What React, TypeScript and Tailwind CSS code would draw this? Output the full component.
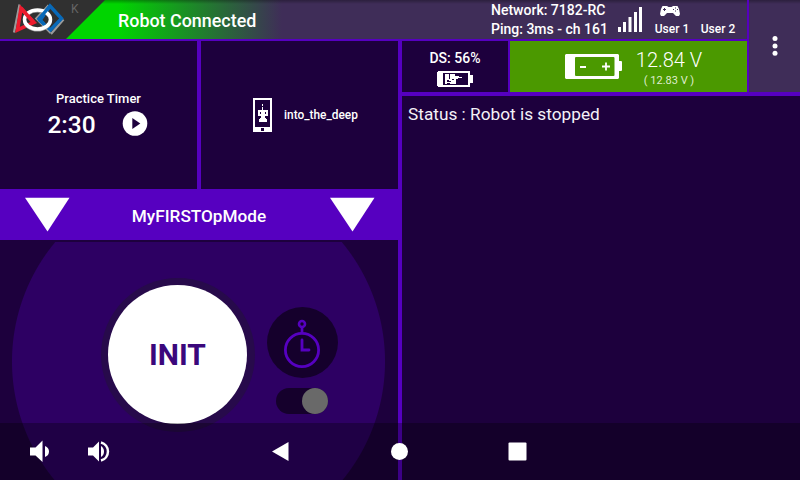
import React from "react";

function FirstLogo() {
  return (
    <svg className="ml-[12px] mt-[3px] h-[32px] w-[53px] shrink-0" viewBox="12 3 53 32" fill="none">
      <path d="M19.500 4.500L14 32.500M51 34L63.500 19.500" stroke="#9a9a9a" strokeWidth="2.200" />
      <path d="M48.500 5L36 18.500L50.500 33" stroke="#999" strokeWidth="1.800" />
      <path d="M21 8.500L17.500 30L34 22.500Z" stroke="#ed1c2e" strokeWidth="3.600" />
      <path d="M50 6L61.500 18.500L50.500 30L40 20.500Z" stroke="#0869b8" strokeWidth="3.400" />
      <ellipse cx="37.500" cy="20.500" rx="13" ry="9.500" stroke="#999" strokeWidth="3" />
      <ellipse cx="37.500" cy="19.500" rx="13" ry="9.500" stroke="#fff" strokeWidth="3.500" />
      <path d="M21 8L33.500 22.500" stroke="#ed1c2e" strokeWidth="3.600" />
      <path d="M44 24L39 19L50 6" stroke="#0869b8" strokeWidth="3.400" />
    </svg>
  );
}

function Header() {
  return (
    <header className="flex h-[39px] bg-[linear-gradient(180deg,#0000004d_0px,#00000000_4px),linear-gradient(90deg,#00d500_0px,#00d500_118px,#3f2d58_282px)]">
      <div className="flex h-full w-[106px] shrink-0 bg-[#303030] [clip-path:polygon(0_0,105px_0,66px_100%,0_100%)]">
        <FirstLogo />
        <span className="ml-[6px] mt-[1px] text-[12px] leading-[16px] text-[#656565]">K</span>
      </div>
      <div className="ml-[12px] mt-[1px] w-[373px] text-[17.900px] font-medium leading-[39px]">Robot Connected</div>
      <div className="w-[127px] text-[14px] font-medium leading-[19px] whitespace-nowrap">
        <div className="mt-[1px]">Network: 7182-RC</div>
        <div>Ping: 3ms - ch 161</div>
      </div>
      <svg className="mt-[6px] h-[27px] w-[25px]" viewBox="618 6 25 27" fill="#fff">
        <path d="M618 27h3v5h-3zM623 22h3v10h-3zM628.500 17h3v15h-3zM634 12h3v20h-3zM639 7h3v25h-3z" />
      </svg>
      <div className="ml-[9px] w-[40px] text-center text-[12px] font-medium leading-[14px]">
        <svg className="ml-[7px] mt-[5px] h-[12px] w-[22px]" viewBox="659 5 22 12">
          <path d="M662.500 6h4.500l1.500 1h3l1.500-1h4.500l1.500 3 1 5-1 2h-3l-3-3h-6l-3 3h-3l-1-2 1-5z" fill="#fff" />
          <path d="M664.500 8v3M663 9.500h3M673 9.500h1M675 8h1M675 11h1M677 9.500h1" stroke="#3f2d58" strokeWidth="1" />
        </svg>
        <div className="mt-[5px] whitespace-nowrap">User 1</div>
      </div>
      <div className="ml-[5px] mt-[22px] w-[42px] text-center text-[12px] font-medium leading-[14px] whitespace-nowrap">User 2</div>
    </header>
  );
}

function LeftPane() {
  return (
    <section className="flex w-[398px] shrink-0 flex-col">
      <div className="flex h-[148px] gap-[4px]">
        <div className="flex w-[197px] flex-col items-center bg-[#1d003d] pt-[50px]">
          <div className="text-[13px] font-medium leading-[16px]">Practice Timer</div>
          <div className="mt-[2px] flex items-start gap-[26px] pr-[2px]">
            <span className="text-[24.500px] font-medium leading-[32px]">2:30</span>
            <svg className="mt-[2px] h-[26px] w-[26px]" viewBox="0 0 26 26">
              <circle cx="13" cy="12.500" r="12.300" fill="#fff" />
              <path d="M10.300 7v11l8-5.500z" fill="#1d003d" />
            </svg>
          </div>
        </div>
        <div className="flex w-[197px] items-start bg-[#1d003d]">
          <svg className="ml-[52px] mt-[57px] h-[34px] w-[19px]" viewBox="0 0 19 34" shapeRendering="crispEdges">
            <path d="M0 0h19v34H0z" fill="#fff" />
            <path d="M2 2h15v27H2zM8 30h3v3H8z" fill="#1d003d" />
            <path d="M9 6h1v2H9zM9 9h1v3h5v6h-3v2h1v1h1v3H6v-3h1v-1h1v-2H5v-6h4z" fill="#fff" />
            <path d="M7 14h1v2H7zM12 14h1v2h-1z" fill="#1d003d" />
          </svg>
          <span className="ml-[12px] mt-[66px] text-[11.900px] font-medium leading-[16px]">into_the_deep</span>
        </div>
      </div>
      <div className="flex h-[51px] items-start bg-[#5600c0]">
        <svg className="ml-[25px] mt-[8px] h-[35px] w-[45px]" viewBox="0 0 45 35"><path d="M0 .8h44.500L22.500 34.500z" fill="#fff" /></svg>
        <div className="mt-[14px] w-[260px] text-center text-[17.200px] font-medium leading-[26px]"><span className="relative left-[-1px]">MyFIRSTOpMode</span></div>
        <svg className="mt-[8px] h-[35px] w-[45px]" viewBox="0 0 45 35"><path d="M0 .8h44.500L22.500 34.500z" fill="#fff" /></svg>
      </div>
      <div className="h-[240px] bg-[#1d003d] pt-[2px]">
        <div className="flex h-[238px] items-start bg-[radial-gradient(circle_at_198.500px_119.500px,#2d0063_186px,transparent_187px)]">
          <button className="ml-[101px] mt-[36px] flex h-[154px] w-[154px] items-center justify-center rounded-full bg-[#270a4b]">
            <span className="mr-px mb-px flex h-[139px] w-[139px] items-center justify-center rounded-full bg-white text-[30px] font-bold text-[#3b087c]">INIT</span>
          </button>
          <div className="ml-[12px] mt-[65px] flex w-[71px] flex-col">
            <svg className="h-[71px] w-[71px]" viewBox="267 307 71 71" fill="none" stroke="#5600c0">
              <circle cx="302.500" cy="342.500" r="35.500" fill="#15002c" stroke="none" />
              <circle cx="302" cy="350" r="16.600" strokeWidth="2.800" />
              <circle cx="302" cy="324" r="3" strokeWidth="2.600" />
              <path d="M302 328v6" strokeWidth="2.700" />
              <path d="M302 340v10h7" strokeWidth="2.800" strokeLinecap="round" />
            </svg>
            <div className="ml-[9px] mt-[10px] flex h-[26px] w-[52px] justify-end rounded-full bg-[#15002c]">
              <span className="h-[26px] w-[26px] rounded-full bg-[#696969]" />
            </div>
          </div>
        </div>
      </div>
    </section>
  );
}

function RightPane() {
  return (
    <section className="flex grow flex-col">
      <div className="flex h-[51px] gap-[2px]">
        <div className="flex w-[106px] flex-col items-center bg-[#1d003d] pt-[9px]">
          <div className="text-[14px] font-medium leading-[16px]">DS: 56%</div>
          <svg className="mt-[5px] h-[16px] w-[36px]" viewBox="437 71 36 16" shapeRendering="crispEdges">
            <path d="M438 71h32v4h3v8h-3v4h-32l-1-1V72z" fill="#fff" />
            <path d="M443 73h25v12h-25z" fill="#1d003d" />
            <path d="M445 74h4v5h1v-5h5v2h4v1h3v1h-4v1h-2v5h-6v-1h-3v1h-2z" fill="#fff" />
            <path d="M447 80h2v1h2v1h-4zM452 79h2v1h-2z" fill="#1d003d" />
          </svg>
        </div>
        <div className="flex w-[237px] items-start bg-[#4b9900]">
          <svg className="ml-[55px] mt-[13px] h-[25px] w-[57px]" viewBox="565 54 57 25">
            <path d="M566 54h52l1 1v6h2.500l.5 1v8l-.5 1H619v7l-1 1h-52l-1-1V55z" fill="#fff" />
            <rect x="575" y="57" width="39.500" height="19" rx="1" fill="#4b9900" />
            <path d="M580 67h6M602 66.500h8M606 62.500v8" stroke="#fff" strokeWidth="1.800" />
          </svg>
          <div className="ml-[7px] mt-[7px] w-[80px] text-center text-white">
            <div className="text-[20px] font-light leading-[24px] whitespace-nowrap">12.84 V</div>
            <div className="mt-[2px] text-[11px] leading-[14px] text-[#dfecce] whitespace-nowrap">( 12.83 V )</div>
          </div>
        </div>
      </div>
      <div className="mt-[4px] grow bg-[#1d003d] pl-[6px] pt-[7px] text-[17.250px] leading-[22px] text-[#f4f1f7]">Status : Robot is stopped</div>
    </section>
  );
}

function NavigationBar() {
  return (
    <nav className="absolute bottom-0 left-0 flex h-[57px] w-full bg-black/30">
      <svg className="h-[57px] w-full" viewBox="0 423 800 57" fill="#fff">
        <path d="M30 447.500h5.500l7-7v21.500l-7-6.500H30zM45 446q4 1.500 4 5.500t-4 5.500z" />
        <path d="M88 447.500h5l6-6v20l-6-6h-5zM101 446q3 2 3 5.500t-3 5.500z" />
        <path d="M101 442.500a9.300 9.300 0 0 1 0 18" fill="none" stroke="#fff" strokeWidth="2.500" />
        <path d="M272 451.500l16.500-9.500v19z" />
        <circle cx="399.500" cy="451.500" r="8.500" />
        <rect x="508.500" y="442.500" width="18" height="18" rx="1" />
      </svg>
    </nav>
  );
}

export default function App() {
  return (
    <main className="relative flex h-[480px] w-[800px] flex-col overflow-hidden bg-[#5600c0] font-[Roboto,sans-serif] text-white">
      <div className="flex h-[92px] shrink-0">
        <div className="w-[747px]"><Header /></div>
        <div className="ml-[2px] flex w-[51px] items-center justify-center bg-[#3f2d58] bg-[linear-gradient(180deg,#0000004d_0px,#00000000_4px)] pl-[1px]">
          <svg className="h-[20px] w-[6px]" viewBox="0 0 6 20" fill="#fff"><circle cx="3" cy="2.600" r="2.500" /><circle cx="3" cy="10" r="2.500" /><circle cx="3" cy="17.300" r="2.500" /></svg>
        </div>
      </div>
      <div className="mt-[-51px] flex h-[439px] gap-[4px]"><LeftPane /><RightPane /></div>
      <NavigationBar />
    </main>
  );
}
